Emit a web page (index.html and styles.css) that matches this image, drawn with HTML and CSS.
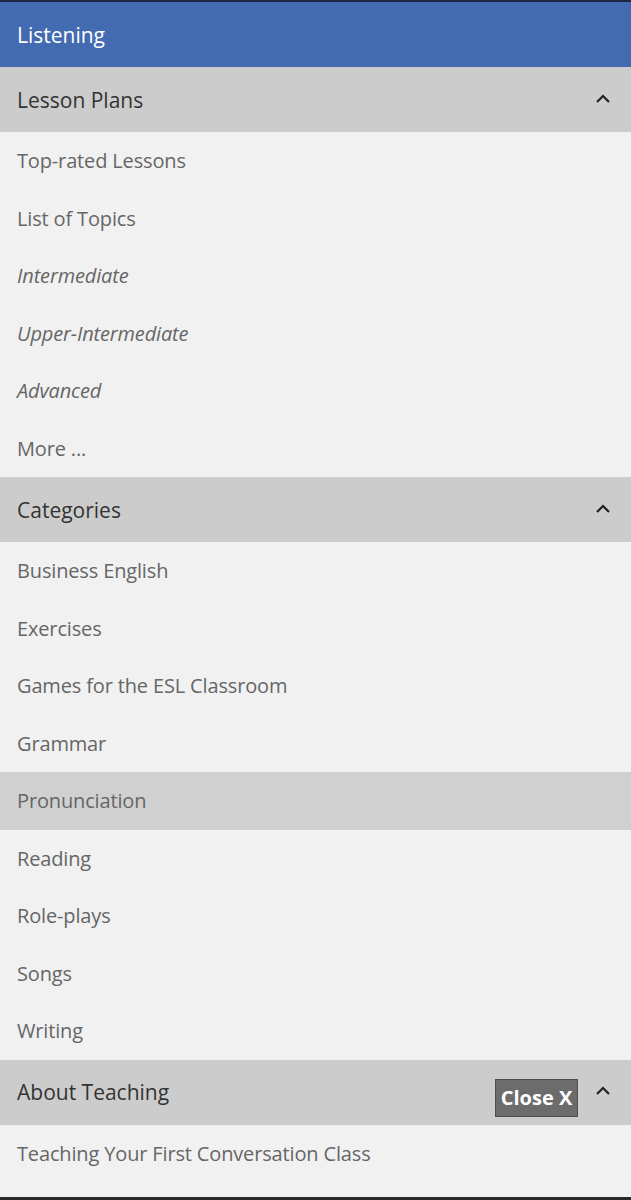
FILE: index.html
```html
<!DOCTYPE html>
<html lang="en">

<head>
  <meta charset="UTF-8">
  <meta name="viewport" content="width=device-width, initial-scale=1.0">
  <title>Listening</title>
  <link rel="stylesheet" href="styles.css">
</head>

<body>
  <div class="menu">
    <div class="title">Listening</div>

    <div class="group">
      <div class="group-head">
        <span>Lesson Plans</span>
        <svg class="caret" width="16" height="10" viewBox="0 0 16 10"><path d="M2 8 L8 2 L14 8" fill="none" stroke="#222" stroke-width="2.2"/></svg>
      </div>
      <a class="item">Top-rated Lessons</a>
      <a class="item">List of Topics</a>
      <a class="item italic">Intermediate</a>
      <a class="item italic">Upper-Intermediate</a>
      <a class="item italic">Advanced</a>
      <a class="item">More ...</a>
    </div>

    <div class="group">
      <div class="group-head">
        <span>Categories</span>
        <svg class="caret" width="16" height="10" viewBox="0 0 16 10"><path d="M2 8 L8 2 L14 8" fill="none" stroke="#222" stroke-width="2.2"/></svg>
      </div>
      <a class="item">Business English</a>
      <a class="item">Exercises</a>
      <a class="item">Games for the ESL Classroom</a>
      <a class="item">Grammar</a>
      <a class="item active">Pronunciation</a>
      <a class="item">Reading</a>
      <a class="item">Role-plays</a>
      <a class="item">Songs</a>
      <a class="item">Writing</a>
    </div>

    <div class="group">
      <div class="group-head">
        <span>About Teaching</span>
        <button class="close">Close X</button>
        <svg class="caret" width="16" height="10" viewBox="0 0 16 10"><path d="M2 8 L8 2 L14 8" fill="none" stroke="#222" stroke-width="2.2"/></svg>
      </div>
      <a class="item">Teaching Your First Conversation Class</a>
    </div>
  </div>
</body>

</html>
```
FILE: styles.css
```css
* {
  margin: 0;
  padding: 0;
  box-sizing: border-box;
}

body {
  font-family: "Open Sans", "Liberation Sans", sans-serif;
  background: #f1f1f1;
}

.menu {
  width: 631px;
  height: 1200px;
  overflow: hidden;
  border-top: 2px solid #1d2744;
  border-bottom: 3px solid #2a2a2a;
  background: #f1f1f1;
}

.title {
  height: 65px;
  background: #436bb2;
  color: #fff;
  font-size: 21px;
  padding-left: 17px;
  display: flex;
  align-items: center;
}

.group-head {
  height: 65px;
  background: #cccccc;
  color: #333;
  font-size: 21px;
  padding: 0 20px 0 17px;
  display: flex;
  align-items: center;
}

.group-head span {
  flex: 1;
}

.caret {
  margin-top: -2px;
}

.item {
  display: flex;
  align-items: center;
  height: 57.5px;
  padding-left: 17px;
  font-size: 20px;
  letter-spacing: -0.15px;
  color: #666;
}

.item.italic {
  font-style: italic;
}

.item.active {
  background: #d0d0d0;
}

.close {
  font-family: "Open Sans", "Liberation Sans", sans-serif;
  font-size: 20px;
  font-weight: bold;
  color: #fff;
  background: #6c6c6c;
  border: 1px solid #4e4e4e;
  height: 38px;
  width: 83px;
  margin-right: 17px;
  margin-top: 11px;
}
```
